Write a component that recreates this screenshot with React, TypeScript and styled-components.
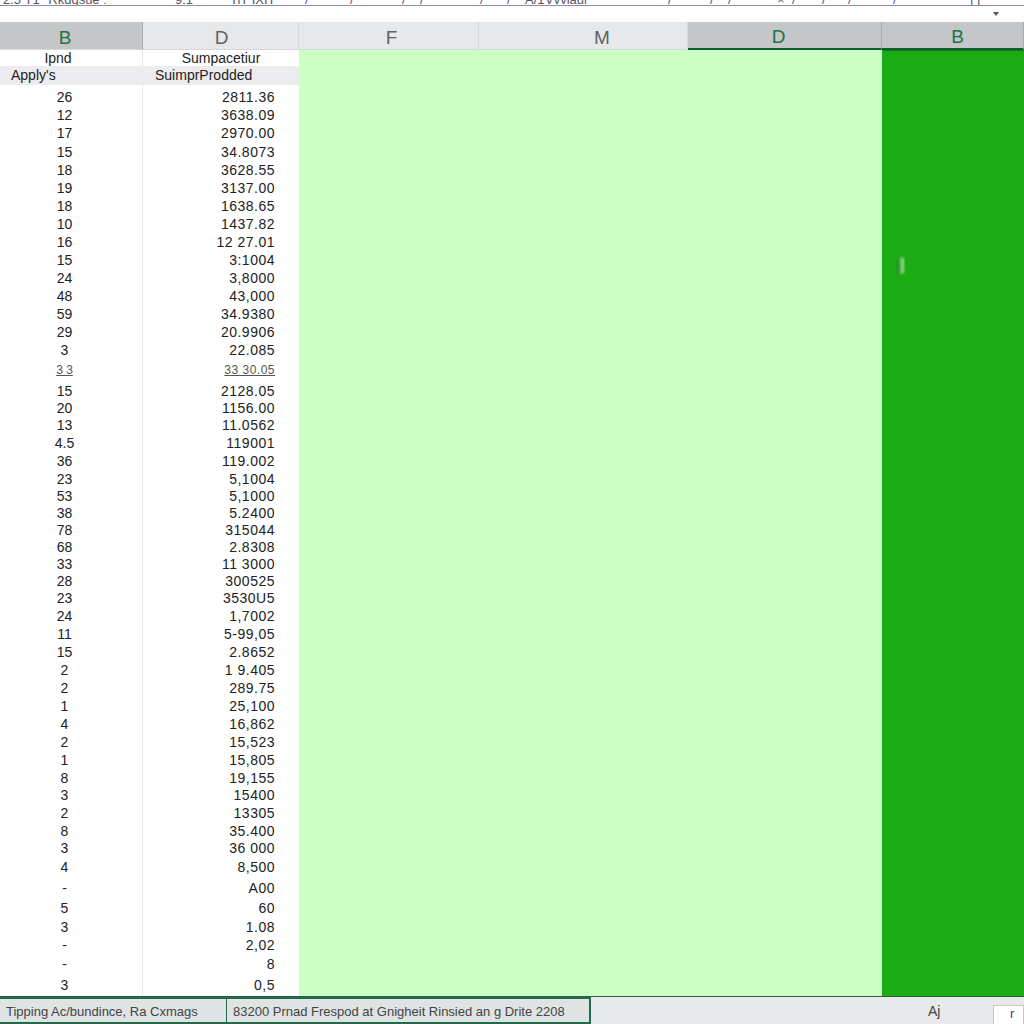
import styled, { createGlobalStyle } from 'styled-components'

const GlobalStyle = createGlobalStyle`
    html, body {
        margin: 0;
        padding: 0;
        background: #fff;
    }
    body {
        font-family: "Liberation Sans", Arial, sans-serif;
    }
`

// offset = how far the letter sits from the middle of its column
const columns = [
    { label: 'B', width: 143, offset: -6, selected: true, underline: false },
    { label: 'D', width: 156, offset: 1, selected: false, underline: false },
    { label: 'F', width: 180, offset: 3, selected: false, underline: false },
    { label: 'M', width: 209, offset: 19, selected: false, underline: false },
    { label: 'D', width: 194, offset: -6, selected: true, underline: true },
    { label: 'B', width: 142, offset: 5, selected: true, underline: true },
]

// bits of the ribbon that peek out above its bottom line: text, width of its slot
const ribbonMarks: [string, number][] = [
    ['2.5 T1* Rkdgsue :', 172], ['9.1', 55], ['TiT IXIT', 75], ['/', 45], ['/', 52], ['/', 18],
    ['/', 60], ['/', 27], ['/', 18], ['A/1', 20], ['Vvvlaul', 123], ['/', 42], ['/', 18],
    ['/', 49], ['×', 15], ['/', 30], ['/', 26], ['/', 45], ['/', 77], ['| |', 30],
]

// qty, amount, row height
const rows: [string, string, number][] = [
    ['26', '2811.36', 18], ['12', '3638.09', 18], ['17', '2970.00', 19], ['15', '34.8073', 18],
    ['18', '3628.55', 18], ['19', '3137.00', 18], ['18', '1638.65', 18], ['10', '1437.82', 18],
    ['16', '12 27.01', 18], ['15', '3:1004', 18], ['24', '3,8000', 18], ['48', '43,000', 18],
    ['59', '34.9380', 18], ['29', '20.9906', 18], ['3', '22.085', 18], ['3 3', '33 30.05', 23],
    ['15', '2128.05', 18], ['20', '1156.00', 17], ['13', '11.0562', 17], ['4.5', '119001', 18],
    ['36', '119.002', 19], ['23', '5,1004', 17], ['53', '5,1000', 17], ['38', '5.2400', 17],
    ['78', '315044', 17], ['68', '2.8308', 17], ['33', '11 3000', 17], ['28', '300525', 16],
    ['23', '3530U5', 18], ['24', '1,7002', 18], ['11', '5-99,05', 18], ['15', '2.8652', 18],
    ['2', '1 9.405', 18], ['2', '289.75', 18], ['1', '25,100', 18], ['4', '16,862', 18],
    ['2', '15,523', 18], ['1', '15,805', 18], ['8', '19,155', 18], ['3', '15400', 17],
    ['2', '13305', 18], ['8', '35.400', 18], ['3', '36 000', 17], ['4', '8,500', 21],
    ['-', 'A00', 21], ['5', '60', 19], ['3', '1.08', 19], ['-', '2,02', 17], ['-', '8', 21],
    ['3', '0,5', 21],
]

const SMUDGED_ROW = 15

const Page = styled.div`
    width: 1024px;
    height: 1024px;
    overflow: hidden;
    display: flex;
    flex-direction: column;
    background: #fff;
    color: #222;
`

const Ribbon = styled.div`
    position: relative;
    height: 22px;
    background: #fff;
    flex: none;
`

const RibbonLine = styled.div`
    height: 6px;
    box-sizing: border-box;
    display: flex;
    align-items: flex-end;
    padding-left: 3px;
    border-bottom: 1px solid #8f88a8;
    overflow: hidden;
    font-size: 13px;
    line-height: 11px;
    color: #55555f;
`

const RibbonMark = styled.span<{ $width: number }>`
    width: ${p => p.$width}px;
    flex: none;
    white-space: nowrap;
`

const DropArrow = styled.span`
    position: absolute;
    top: 12px;
    left: 993px;
    width: 0;
    height: 0;
    border-left: 3px solid transparent;
    border-right: 3px solid transparent;
    border-top: 4px solid #555;
`

const HeaderRow = styled.div`
    display: flex;
    height: 28px;
    flex: none;
`

const HeaderCell = styled.div<{ $width: number; $offset: number; $selected: boolean; $underline: boolean }>`
    width: ${p => p.$width}px;
    box-sizing: border-box;
    display: flex;
    align-items: center;
    justify-content: center;
    padding: 4px ${p => Math.max(0, -p.$offset * 2)}px 0 ${p => Math.max(0, p.$offset * 2)}px;
    font-size: 19px;
    color: ${p => (p.$selected ? '#217346' : '#5c6468')};
    background: ${p => (p.$selected ? '#c5c6c8' : '#e6e8ea')};
    border-right: 1px solid ${p => (p.$selected ? '#a9abad' : '#d5d7d9')};
    border-bottom: ${p => (p.$underline ? '2px solid #0f5f35' : '1px solid #d5d7d9')};
`

const Body = styled.div`
    flex: 1;
    display: flex;
    min-height: 0;
`

const Table = styled.div`
    width: 299px;
    flex: none;
    display: flex;
    flex-direction: column;
    background: linear-gradient(to right, #fff 142px, #e6e8ea 142px, #e6e8ea 143px, #fff 143px);
    font-size: 14px;
`

const TitleRow = styled.div`
    height: 16px;
    display: grid;
    grid-template-columns: 143px 156px;
    line-height: 16px;
    text-align: center;
`

const TitleLeft = styled.span`
    padding-right: 27px;
`

const SubtitleRow = styled.div`
    height: 19px;
    margin-bottom: 3px;
    display: grid;
    grid-template-columns: 143px 156px;
    background: #ececee;
    line-height: 19px;
`

const SubtitleLeft = styled.span`
    padding-left: 11px;
`

const SubtitleRight = styled.span`
    padding-left: 12px;
`

const DataRow = styled.div<{ $height: number; $smudged: boolean }>`
    height: ${p => p.$height}px;
    line-height: ${p => p.$height}px;
    display: grid;
    grid-template-columns: 143px 156px;
    font-size: ${p => (p.$smudged ? 12 : 14)}px;
    color: ${p => (p.$smudged ? '#555' : 'inherit')};
    text-decoration: ${p => (p.$smudged ? 'underline' : 'none')};
`

const Qty = styled.span`
    text-align: center;
    padding-right: 14px;
`

const Amount = styled.span`
    text-align: right;
    padding-right: 24px;
    letter-spacing: 0.5px;
`

const LightPanel = styled.div`
    flex: 1;
    background: #ccffc4;
`

const DarkPanel = styled.div`
    position: relative;
    width: 142px;
    flex: none;
    border-top: 1px solid #0d7a1a;
    box-sizing: border-box;
    background-color: #1db515;
    background-image: repeating-conic-gradient(rgba(0, 70, 0, 0.16) 0 25%, transparent 0 50%);
    background-size: 2px 2px;
`

const Glint = styled.div`
    position: absolute;
    top: 206px;
    left: 15px;
    width: 7px;
    height: 17px;
    border-radius: 3px;
    background: linear-gradient(to right, #0d7f10, #a5f0a0);
    filter: blur(1px);
`

const StatusBar = styled.div`
    height: 28px;
    flex: none;
    box-sizing: border-box;
    display: flex;
    align-items: flex-end;
    background: #e8e9eb;
    border-top: 1px solid #2f5a48;
    font-size: 13px;
    color: #444;
`

const StatusCell = styled.div<{ $width: number; $dividerWidth: number }>`
    width: ${p => p.$width}px;
    height: 27px;
    box-sizing: border-box;
    background: #dfe3e3;
    border-top: 2px solid #1f6b4a;
    border-bottom: 2px solid #1f6b4a;
    border-right: ${p => p.$dividerWidth}px solid #1f6b4a;
    padding: 2px 0 0 6px;
    line-height: 21px;
    white-space: nowrap;
    overflow: hidden;
`

const StatusSpacer = styled.div`
    flex: 1;
`

const StatusLabel = styled.span`
    width: 65px;
    align-self: center;
    font-size: 14px;
`

const StatusBox = styled.div`
    width: 31px;
    height: 19px;
    box-sizing: border-box;
    background: #fff;
    border: 1px solid #c8c8c8;
    border-bottom: none;
    line-height: 16px;
    padding-left: 16px;
`

export default function App() {
    return (
        <Page>
            <GlobalStyle />
            <Ribbon>
                <RibbonLine>
                    {ribbonMarks.map(([text, width], i) => (
                        <RibbonMark key={i} $width={width}>{text}</RibbonMark>
                    ))}
                </RibbonLine>
                <DropArrow />
            </Ribbon>
            <HeaderRow>
                {columns.map((c, i) => (
                    <HeaderCell key={i} $width={c.width} $offset={c.offset} $selected={c.selected} $underline={c.underline}>
                        {c.label}
                    </HeaderCell>
                ))}
            </HeaderRow>
            <Body>
                <Table>
                    <TitleRow>
                        <TitleLeft>Ipnd</TitleLeft>
                        <span>Sumpacetiur</span>
                    </TitleRow>
                    <SubtitleRow>
                        <SubtitleLeft>Apply's</SubtitleLeft>
                        <SubtitleRight>SuimprProdded</SubtitleRight>
                    </SubtitleRow>
                    {rows.map(([qty, amount, height], i) => (
                        <DataRow key={i} $height={height} $smudged={i === SMUDGED_ROW}>
                            <Qty>{qty}</Qty>
                            <Amount>{amount}</Amount>
                        </DataRow>
                    ))}
                </Table>
                <LightPanel />
                <DarkPanel>
                    <Glint />
                </DarkPanel>
            </Body>
            <StatusBar>
                <StatusCell $width={227} $dividerWidth={1}>Tipping Ac/bundince, Ra Cxmags</StatusCell>
                <StatusCell $width={364} $dividerWidth={2}>83200 Prnad Frespod at Gnigheit Rinsied an g Drite 2208</StatusCell>
                <StatusSpacer />
                <StatusLabel>Aj</StatusLabel>
                <StatusBox>r</StatusBox>
            </StatusBar>
        </Page>
    )
}
